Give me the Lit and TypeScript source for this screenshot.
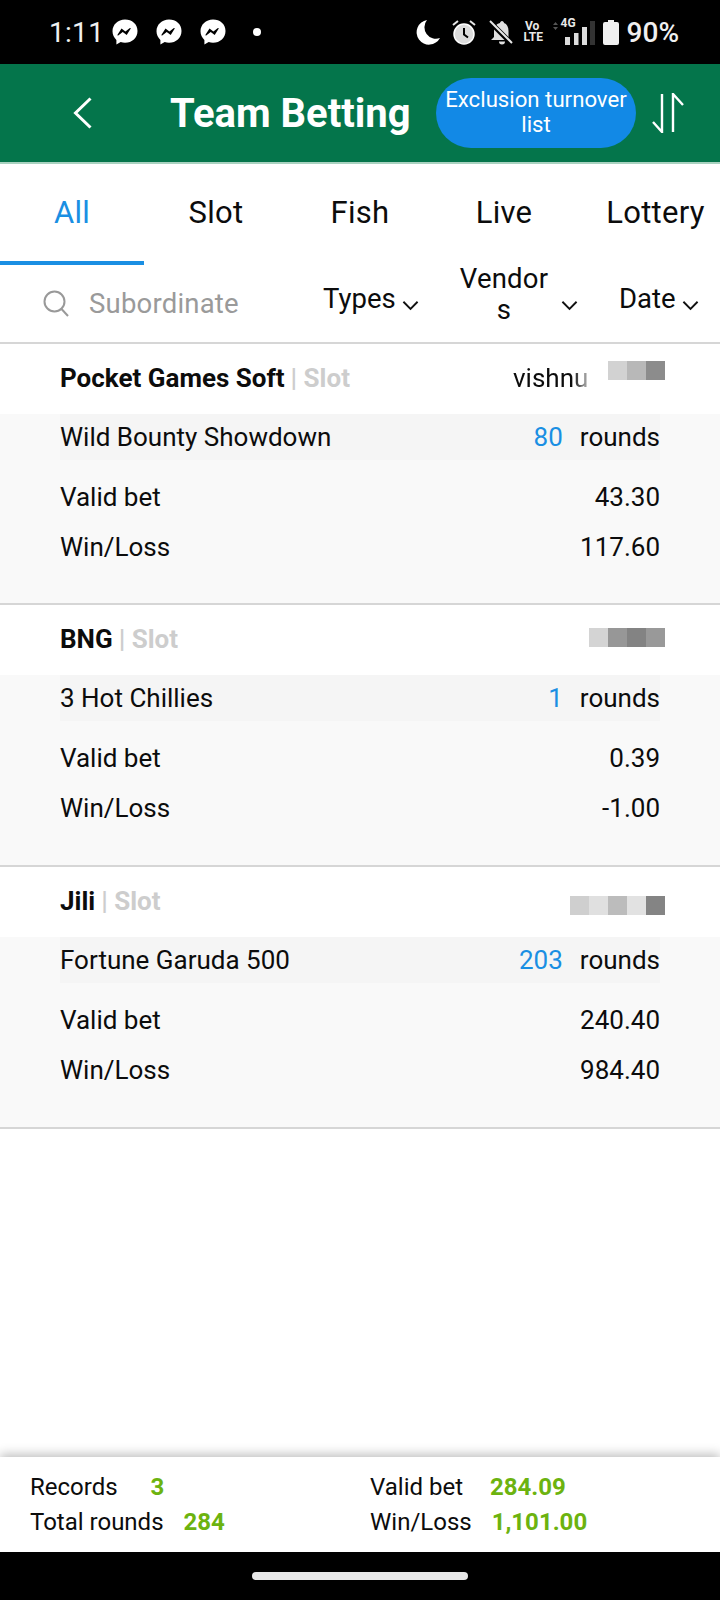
import { LitElement, html, css } from "lit";
import { customElement } from "lit/decorators.js";

const messenger = html`<svg class="msg" viewBox="0 0 26 26"><path fill="#fff" d="M13 0.5C5.900 0.5 0.500 5.600 0.500 12.300c0 3.500 1.500 6.500 3.900 8.600v4.600l4.300-2.400c1.300 .4 2.800 .6 4.300 .6 7.100 0 12.500-5.100 12.500-11.800S20.100 .5 13 .5z"/><path fill="#000" d="M5.500 15.700l4-6.100 3.900 2.900 4.500-3.400c.5-.4 1 .2 .7 .7l-3.900 6.100-4-2.900-4.500 3.400c-.5 .3-1-.2-.7-.7z"/></svg>`;

const cards = [
  { vendor: "Pocket Games Soft", type: "Slot", user: "vishnu", h: 261, top: 17, px: ["#d2d2d2", "#b8b8b8", "#8c8c8c"], game: "Wild Bounty Showdown", rounds: "80", bet: "43.30", win: "117.60" },
  { vendor: "BNG", type: "Slot", user: "", h: 262, top: 23, px: ["#d4d4d4", "#979797", "#838383", "#999999"], game: "3 Hot Chillies", rounds: "1", bet: "0.39", win: "-1.00" },
  { vendor: "Jili", type: "Slot", user: "", h: 261.5, top: 29, px: ["#cfcfcf", "#e0e0e0", "#bcbcbc", "#e2e2e2", "#848484"], game: "Fortune Garuda 500", rounds: "203", bet: "240.40", win: "984.40" },
];

const chevron = html`<svg class="chev" viewBox="0 0 18 11"><path d="M1.500 1.500L9 9l7.500-7.500" fill="none" stroke="#111" stroke-width="2"/></svg>`;

@customElement("app-root")
export class AppRoot extends LitElement {
  static styles = css`
    :host { display: block; width: 720px; height: 1600px; font-family: Roboto, "Liberation Sans", sans-serif; color: #0c0c0c; background: #fff; overflow: hidden; }
    .page { display: flex; flex-direction: column; height: 1600px; }
    .status { height: 64px; flex: none; background: #000; color: #f0f0f0; display: flex; align-items: center; padding: 0 41px 0 49px; font-size: 28px; }
    .time { width: 63px; letter-spacing: .3px; }
    .msg { width: 26px; height: 26px; margin-right: 18px; flex: none; }
    .dot { width: 8px; height: 8px; border-radius: 50%; background: #fff; margin-left: 9px; }
    .sp { flex: 1; }
    .sicons { display: flex; align-items: center; }
    .sicons svg { flex: none; }
    .moon { margin-right: 12px; }
    .alarm { margin-right: 13px; }
    .volte { display: flex; flex-direction: column; font-size: 12px; line-height: 11px; font-weight: 700; width: 17px; text-align: center; margin: 0 11px; color: #e8e8e8; }
    .g4 { font-size: 12px; font-weight: 700; position: absolute; left: 9px; top: -2px; line-height: 12px; color: #e8e8e8; }
    .signal { position: relative; width: 45px; height: 26px; display: block; }
    .batt { margin-left: 6px; }
    .pct { margin-left: 8px; font-weight: 500; }
    .header { height: 98px; flex: none; background: #04754b; border-bottom: 2px solid #a9d2c0; display: flex; align-items: center; color: #fff; }
    .back { width: 19px; height: 32px; margin-left: 73px; flex: none; }
    .title { font-size: 40px; font-weight: 700; margin-left: 78px; width: 266px; white-space: nowrap; }
    .btn { width: 200px; height: 70px; border-radius: 35px; background: #1289e6; font-size: 22.200px; line-height: 25px; display: flex; align-items: center; justify-content: center; text-align: center; flex: none; padding: 0 8px 2px; box-sizing: border-box; }
    .sort { width: 32px; height: 40px; margin-left: 16px; flex: none; }
    .tabs { display: flex; height: 101px; flex: none; }
    .tab { width: 144px; flex: none; font-size: 31px; padding-top: 30px; text-align: center; box-sizing: border-box; border-bottom: 4px solid transparent; letter-spacing: .3px; white-space: nowrap; }
    .tab.last { width: 159px; }
    .tab.on { color: #1a8fe3; border-bottom-color: #1a8fe3; }
    .filters { height: 79px; flex: none; display: flex; align-items: center; box-sizing: border-box; border-bottom: 2px solid #d6d6d6; font-size: 27.500px; }
    .search { width: 26px; height: 27px; margin-left: 43px; flex: none; }
    .ph { color: #9a9a9a; margin-left: 20px; width: 234px; flex: none; letter-spacing: .2px; }
    .f { display: flex; align-items: center; flex: none; align-self: stretch; }
    .f.types { width: 136px; }
    .f.vendor { width: 160px; }
    .ftext { margin-bottom: 11px; }
    .vn { width: 90px; text-align: center; line-height: 31px; word-break: break-all; margin-right: 6px; margin-bottom: 19px; letter-spacing: .2px; }
    .chev { width: 17px; height: 11px; margin-left: 6px; margin-top: 3px; flex: none; }
    .list { flex: 1; min-height: 0; }
    .card { border-bottom: 2px solid #d6d6d6; box-sizing: border-box; display: flex; flex-direction: column; }
    .head { height: 70px; flex: none; display: flex; padding: 0 55px 0 60px; align-items: flex-start; font-size: 26px; }
    .vname { font-weight: 700; line-height: 30px; margin-top: 19px; }
    .vtype { color: #cdcdcd; font-weight: 700; line-height: 30px; margin-top: 19px; margin-left: 6px; }
    .user { line-height: 30px; margin-top: 19px; margin-right: 21px; width: 74px; white-space: nowrap; overflow: hidden; -webkit-mask-image: linear-gradient(90deg, #000 80%, rgba(0,0,0,.35)); mask-image: linear-gradient(90deg, #000 80%, rgba(0,0,0,.35)); }
    .pixels { display: flex; }
    .pixel { width: 19px; height: 19px; }
    .body { flex: 1; background: #f9f9f9; font-size: 26px; padding: 0 60px; }
    .row { display: flex; justify-content: space-between; align-items: center; height: 50px; }
    .row.game { height: 46px; background: #f5f5f5; margin-bottom: 12px; }
    .count { color: #1a8fe3; margin-right: 17px; }
    .footer { height: 95px; flex: none; background: #fff; box-shadow: 0 -3px 10px rgba(0,0,0,.25); position: relative; display: grid; grid-template-columns: 340px 1fr; grid-template-rows: 35px 35px; padding: 12px 0 0 30px; box-sizing: border-box; font-size: 24px; align-items: center; }
    .sum { display: flex; white-space: nowrap; }
    .sum b { color: #6cb30f; font-weight: 700; }
    .nav { height: 48px; flex: none; background: #000; display: flex; justify-content: center; padding-top: 20px; box-sizing: border-box; }
    .pill { width: 216px; height: 8px; border-radius: 4px; background: #e8e8e8; }
  `;

  render() {
    return html`<div class="page">
      <div class="status">
        <span class="time">1:11</span>
        ${messenger}${messenger}${messenger}
        <span class="dot"></span>
        <span class="sp"></span>
        <div class="sicons">
          <svg class="moon" width="24" height="26" viewBox="0 0 24 26"><path fill="#fff" d="M11 1A12.400 12.400 0 1 0 24 19 11.500 11.500 0 0 1 11 1z"/></svg>
          <svg class="alarm" width="24" height="26" viewBox="0 0 24 26"><circle cx="12" cy="15" r="10" fill="#dcdcdc" stroke="#fff" stroke-width="1.500"/><path d="M12 9v6.500l4 3" stroke="#000" stroke-width="2" fill="none"/><path d="M1 6l5-4M23 6l-5-4" stroke="#e8e8e8" stroke-width="2"/></svg>
          <svg width="24" height="26" viewBox="0 0 24 26"><path fill="#e0e0e0" d="M13 2c-1 0-2 1-2 2C7 5 5 8 5 12v6L2 21h18L19.500 18v-6c0-4-1.500-7-4.500-8 0-1-1-2-2-2zM10 22.500h6a3 3 0 0 1-6 0z"/><path d="M0 2l22 22" stroke="#000" stroke-width="5"/><path d="M1 2l22 22" stroke="#e8e8e8" stroke-width="2"/></svg>
          <div class="volte"><span>Vo</span><span>LTE</span></div>
          <span class="signal"><span class="g4">4G</span>
            <svg width="45" height="26" viewBox="0 0 45 26"><path d="M1 6l2.500-3 2.500 3zM1 8l2.500 3 2.500-3z" fill="#555"/><rect x="13" y="18" width="5" height="8" fill="#dcdcdc"/><rect x="22" y="14" width="4.500" height="12" fill="#dcdcdc"/><rect x="30" y="8" width="5" height="18" fill="#dcdcdc"/><rect x="38" y="2" width="5" height="24" fill="#333"/></svg>
          </span>
          <svg class="batt" width="16" height="25" viewBox="0 0 16 25"><path fill="#f0f0f0" d="M5 0h6v2h3a2 2 0 0 1 2 2v19a2 2 0 0 1-2 2H2a2 2 0 0 1-2-2V4a2 2 0 0 1 2-2h3z"/></svg>
          <span class="pct">90%</span>
        </div>
      </div>

      <div class="header">
        <svg class="back" viewBox="0 0 19 32"><path d="M17.500 1.500L2.500 16l15 14.500" fill="none" stroke="#fff" stroke-width="3"/></svg>
        <span class="title">Team Betting</span>
        <span class="btn">Exclusion turnover list</span>
        <svg class="sort" viewBox="0 0 32 40"><path d="M10 1v38L1 29M21 39V1L31 12" fill="none" stroke="#fff" stroke-width="2.400"/></svg>
      </div>

      <div class="tabs">
        ${["All", "Slot", "Fish", "Live", "Lottery"].map((t, i) => html`<div class="tab ${i === 0 ? "on" : ""} ${i === 4 ? "last" : ""}">${t}</div>`)}
      </div>

      <div class="filters">
        <svg class="search" viewBox="0 0 26 27"><circle cx="11.500" cy="11.500" r="10" fill="none" stroke="#999" stroke-width="2"/><path d="M18.500 19l6.500 7" stroke="#999" stroke-width="2"/></svg>
        <span class="ph">Subordinate</span>
        <div class="f types"><span class="ftext">Types</span>${chevron}</div>
        <div class="f vendor"><span class="vn">Vendors</span>${chevron}</div>
        <div class="f"><span class="ftext">Date</span>${chevron}</div>
      </div>

      <div class="list">
        ${cards.map(
          (c) => html`<div class="card" style="height:${c.h}px">
            <div class="head">
              <span class="vname">${c.vendor}</span>
              <span class="vtype">| ${c.type}</span>
              <span class="sp"></span>
              ${c.user ? html`<span class="user">${c.user}</span>` : ""}
              <div class="pixels" style="margin-top:${c.top}px">
                ${c.px.map((p) => html`<span class="pixel" style="background:${p}"></span>`)}
              </div>
            </div>
            <div class="body">
              <div class="row game"><span>${c.game}</span><span class="sp"></span><span class="count">${c.rounds}</span><span>rounds</span></div>
              <div class="row"><span>Valid bet</span><span>${c.bet}</span></div>
              <div class="row"><span>Win/Loss</span><span>${c.win}</span></div>
            </div>
          </div>`
        )}
      </div>

      <div class="footer">
        <div class="sum"><span>Records</span><b style="margin-left:33px">3</b></div>
        <div class="sum"><span>Valid bet</span><b style="margin-left:27px">284.09</b></div>
        <div class="sum"><span>Total rounds</span><b style="margin-left:20px">284</b></div>
        <div class="sum"><span>Win/Loss</span><b style="margin-left:20px">1,101.00</b></div>
      </div>
      <div class="nav"><span class="pill"></span></div>
    </div>`;
  }
}
